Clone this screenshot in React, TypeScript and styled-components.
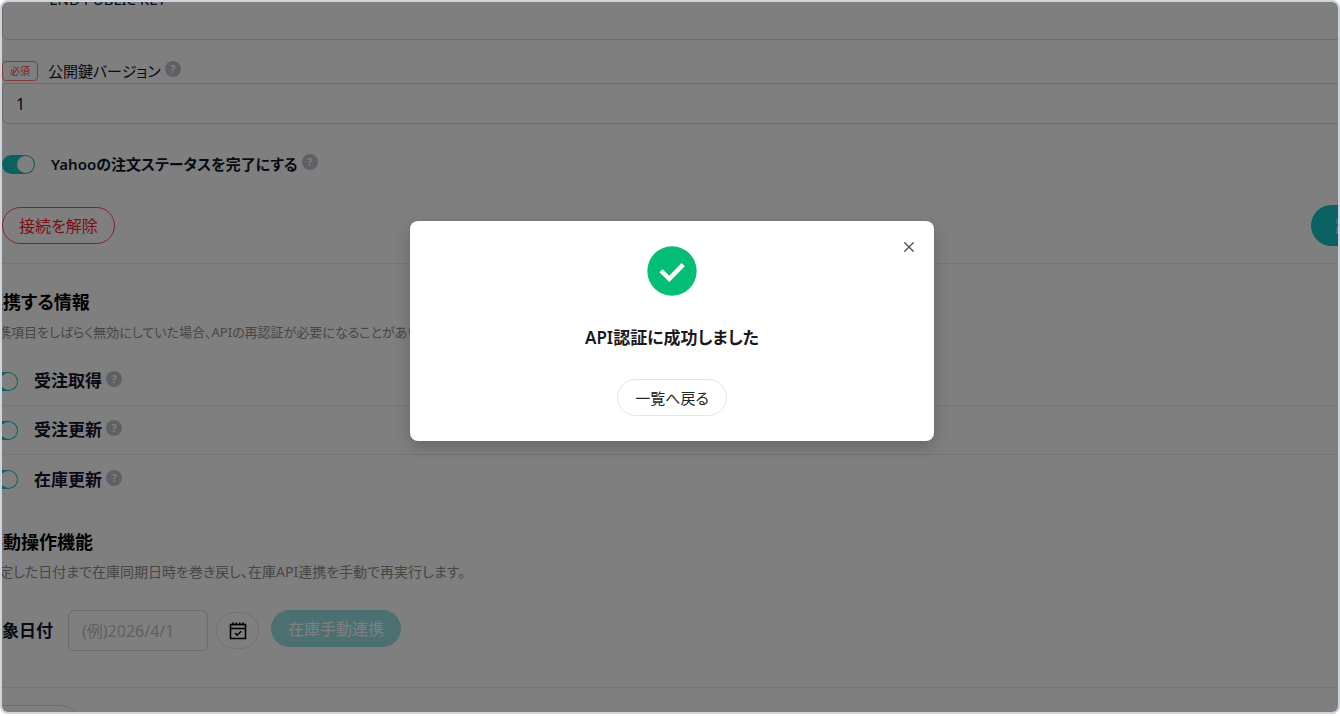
import React from "react";
import styled, { createGlobalStyle, css } from "styled-components";

const GlobalStyle = createGlobalStyle`
  *, *::before, *::after { box-sizing: border-box; }
  html, body, #root { height: 100%; }
  body {
    margin: 0;
    background: #ffffff;
    color: #0f172a;
    font-family: "Noto Sans", "Noto Sans CJK JP", sans-serif;
    font-feature-settings: "palt";
    font-size: 16px;
    line-height: 24px;
  }
  button, input, textarea { font: inherit; color: inherit; font-feature-settings: inherit; }
  h1, h2, p { margin: 0; }
`;

const Frame = styled.div`
  position: relative;
  height: calc(100% - 2px);
  overflow: hidden;
  border: 2px solid #ced3dc;
  border-radius: 8px;
  background: #ffffff;
`;

const Page = styled.main`
  display: flex;
  flex-direction: column;
  margin: -122px -20px 0 0;
`;

const fieldBox = css`
  display: block;
  width: 100%;
  padding: 8px 13px;
  border: 1px solid #d9d9d9;
  border-radius: 6px;
  background: #ffffff;
  outline: none;
`;

const KeyArea = styled.textarea`
  ${fieldBox}
  height: 160px;
  padding-top: 10px;
  padding-left: 22px;
  font-size: 15px;
  resize: none;
  overflow: hidden;
`;

const LabelRow = styled.div`
  display: flex;
  align-items: center;
  margin-top: 19px;
`;

const Required = styled.span`
  padding: 0 7px;
  border: 1px solid #ff7875;
  border-radius: 4px;
  color: #f5414a;
  font-size: 10px;
  line-height: 18px;
`;

const FieldLabel = styled.label`
  margin-left: 10px;
  font-size: 15px;
`;

const TextField = styled.input`
  ${fieldBox}
  height: 41px;
`;

const Help = styled.span`
  display: inline-flex;
  align-items: center;
  justify-content: center;
  width: 16px;
  height: 16px;
  margin: 0 0 4px 4px;
  border-radius: 50%;
  background: #bfc1c9;
  color: #ffffff;
  font-size: 11px;
  font-weight: 700;
  line-height: 16px;
`;

const SwitchRow = styled.label<{ $divided?: boolean; $compact?: boolean }>`
  display: flex;
  align-items: center;
  height: ${(p) => (p.$compact ? 49 : 80)}px;
  border-bottom: ${(p) => (p.$divided ? "1px solid #ebebeb" : "0")};
  font-size: ${(p) => (p.$compact ? 17 : 15)}px;
  font-weight: 600;
`;

const Switch = styled.input`
  appearance: none;
  flex: none;
  width: 33px;
  height: 19px;
  margin: 0 16px 0 0;
  padding: 1px;
  border-radius: 10px;
  background: #13c2c2;
  &::before {
    content: "";
    display: block;
    width: 17px;
    height: 17px;
    margin-left: 14px;
    border-radius: 50%;
    background: #ffffff;
  }
`;

const PillButton = styled.button<{ $tone: "danger" | "primary" | "plain" | "disabled" }>`
  height: 37px;
  padding: 0 16px;
  border: 1px solid #d9d9d9;
  border-radius: 20px;
  background: #ffffff;
  ${(p) => p.$tone === "danger" && css`border-color: #ff4d4f; color: #f5222d;`}
  ${(p) => p.$tone === "primary" && css`height: 41px; padding: 0 24px; border: 0; border-radius: 21px; background: #13c2c2; color: #ffffff;`}
  ${(p) => p.$tone === "disabled" && css`padding: 0 17px; border: 0; background: #98e0e4; color: #ffffff;`}
`;

const Actions = styled.div`
  display: flex;
  align-items: center;
  justify-content: space-between;
  margin-top: 1px;
  margin-right: -80px;
  padding-bottom: 17px;
  border-bottom: 1px solid #ebebeb;
`;

const Section = styled.section`
  margin-left: -17px;
`;

const SectionTitle = styled.h2`
  color: #000000;
  font-size: 18px;
  font-weight: 600;
  line-height: 28px;
`;

const Note = styled.p<{ $small?: boolean }>`
  margin-top: 4px;
  color: #8c8c8c;
  font-size: ${(p) => (p.$small ? 13 : 14)}px;
  line-height: 24px;
`;

const LinkedSection = styled(Section)`
  padding-top: 24px;
`;

const ManualSection = styled(Section)`
  padding: 24px 0 36px;
  border-bottom: 1px solid #ebebeb;
`;

const SwitchList = styled.div`
  margin-top: 13px;
`;

const DateRow = styled.div`
  display: flex;
  align-items: center;
  margin-top: 26px;
`;

const DateLabel = styled.label`
  font-size: 17px;
  font-weight: 600;
`;

const DateField = styled.input`
  ${fieldBox}
  width: 140px;
  height: 41px;
  margin-left: 15px;
  &::placeholder { color: #bfbfbf; opacity: 1; }
`;

const CalendarButton = styled.button`
  display: flex;
  align-items: center;
  justify-content: center;
  width: 43px;
  height: 37px;
  margin: 0 12px 0 8px;
  padding: 0;
  border: 1px solid #e3e3e3;
  border-radius: 20px;
  background: #ffffff;
  color: #000000;
`;

const SyncButton = styled(PillButton)`
  align-self: flex-start;
`;

const Footer = styled.div`
  margin: 17px 0 0 -36px;
`;

const Overlay = styled.div`
  position: absolute;
  inset: 0;
  display: flex;
  align-items: flex-start;
  justify-content: center;
  padding: 219px 0 0 4px;
  background: rgba(0, 0, 0, 0.5);
`;

const Dialog = styled.div`
  position: relative;
  display: flex;
  flex-direction: column;
  align-items: center;
  width: 524px;
  padding: 25px;
  border-radius: 8px;
  background: #ffffff;
  box-shadow: 0 6px 16px rgba(0, 0, 0, 0.2);
`;

const DialogTitle = styled.h1`
  margin: 28px 0 27px;
  color: #1a1a1a;
  font-size: 17px;
  font-weight: 600;
  line-height: 28px;
`;

const CloseButton = styled.button`
  position: absolute;
  top: 14px;
  right: 13px;
  display: flex;
  align-items: center;
  justify-content: center;
  width: 24px;
  height: 24px;
  padding: 0;
  border: 0;
  background: transparent;
  color: #555555;
`;

const BackButton = styled(PillButton)`
  padding: 0 17px;
  border-color: #e5e5e5;
  color: #262626;
  font-size: 15px;
`;

const HelpMark = () => <Help aria-label="ヘルプ">?</Help>;

const CalendarIcon = () => (
  <svg width="18" height="18" viewBox="0 0 18 18" fill="none" stroke="currentColor" strokeWidth="1.6" aria-hidden="true">
    <path d="M1.5 2.5h15v14h-15zM1.5 6.5h15M4 .5v3M7.3.5v3M10.7.5v3M14 .5v3" />
    <path d="M6 11l2.2 2.2L12.2 9.2" />
  </svg>
);

const SuccessIcon = () => (
  <svg width="50" height="50" viewBox="0 0 50 50" aria-hidden="true">
    <circle cx="25" cy="25" r="24.7" fill="#04be76" />
    <path d="M14 24.8l8.3 8.1L36.2 18.6" fill="none" stroke="#ffffff" strokeWidth="4.4" />
  </svg>
);

const CloseIcon = () => (
  <svg width="10" height="10" viewBox="0 0 10 10" stroke="currentColor" strokeWidth="1.4" aria-hidden="true">
    <path d="M.3.3l9.4 9.4M9.7.3L.3 9.7" />
  </svg>
);

const links = ["受注取得", "受注更新", "在庫更新"];

export default function App() {
  return (
    <>
      <GlobalStyle />
      <Frame>
        <Page>
          <KeyArea aria-label="公開鍵" readOnly value={"\n\n\n\n-----END PUBLIC KEY-----"} />
          <LabelRow>
            <Required>必須</Required>
            <FieldLabel htmlFor="key-version">公開鍵バージョン</FieldLabel>
            <HelpMark />
          </LabelRow>
          <TextField id="key-version" defaultValue="1" />
          <SwitchRow>
            <Switch type="checkbox" role="switch" defaultChecked />
            Yahooの注文ステータスを完了にする
            <HelpMark />
          </SwitchRow>
          <Actions>
            <PillButton $tone="danger">接続を解除</PillButton>
            <PillButton $tone="primary">設定を保存</PillButton>
          </Actions>
          <LinkedSection>
            <SectionTitle>連携する情報</SectionTitle>
            <Note $small>連携項目をしばらく無効にしていた場合、APIの再認証が必要になることがあります。</Note>
            <SwitchList>
              {links.map((name, i) => (
                <SwitchRow key={name} $compact $divided={i < 2}>
                  <Switch type="checkbox" role="switch" defaultChecked />
                  {name}
                  <HelpMark />
                </SwitchRow>
              ))}
            </SwitchList>
          </LinkedSection>
          <ManualSection>
            <SectionTitle>手動操作機能</SectionTitle>
            <Note>指定した日付まで在庫同期日時を巻き戻し、在庫API連携を手動で再実行します。</Note>
            <DateRow>
              <DateLabel htmlFor="target-date">対象日付</DateLabel>
              <DateField id="target-date" placeholder="(例)2026/4/1" />
              <CalendarButton aria-label="日付を選択"><CalendarIcon /></CalendarButton>
              <SyncButton $tone="disabled" disabled>在庫手動連携</SyncButton>
            </DateRow>
          </ManualSection>
          <Footer>
            <PillButton $tone="plain">一覧へ戻る</PillButton>
          </Footer>
        </Page>
        <Overlay>
          <Dialog role="dialog" aria-modal="true" aria-labelledby="dialog-title">
            <SuccessIcon />
            <DialogTitle id="dialog-title">API認証に成功しました</DialogTitle>
            <BackButton $tone="plain">一覧へ戻る</BackButton>
            <CloseButton aria-label="閉じる"><CloseIcon /></CloseButton>
          </Dialog>
        </Overlay>
      </Frame>
    </>
  );
}
